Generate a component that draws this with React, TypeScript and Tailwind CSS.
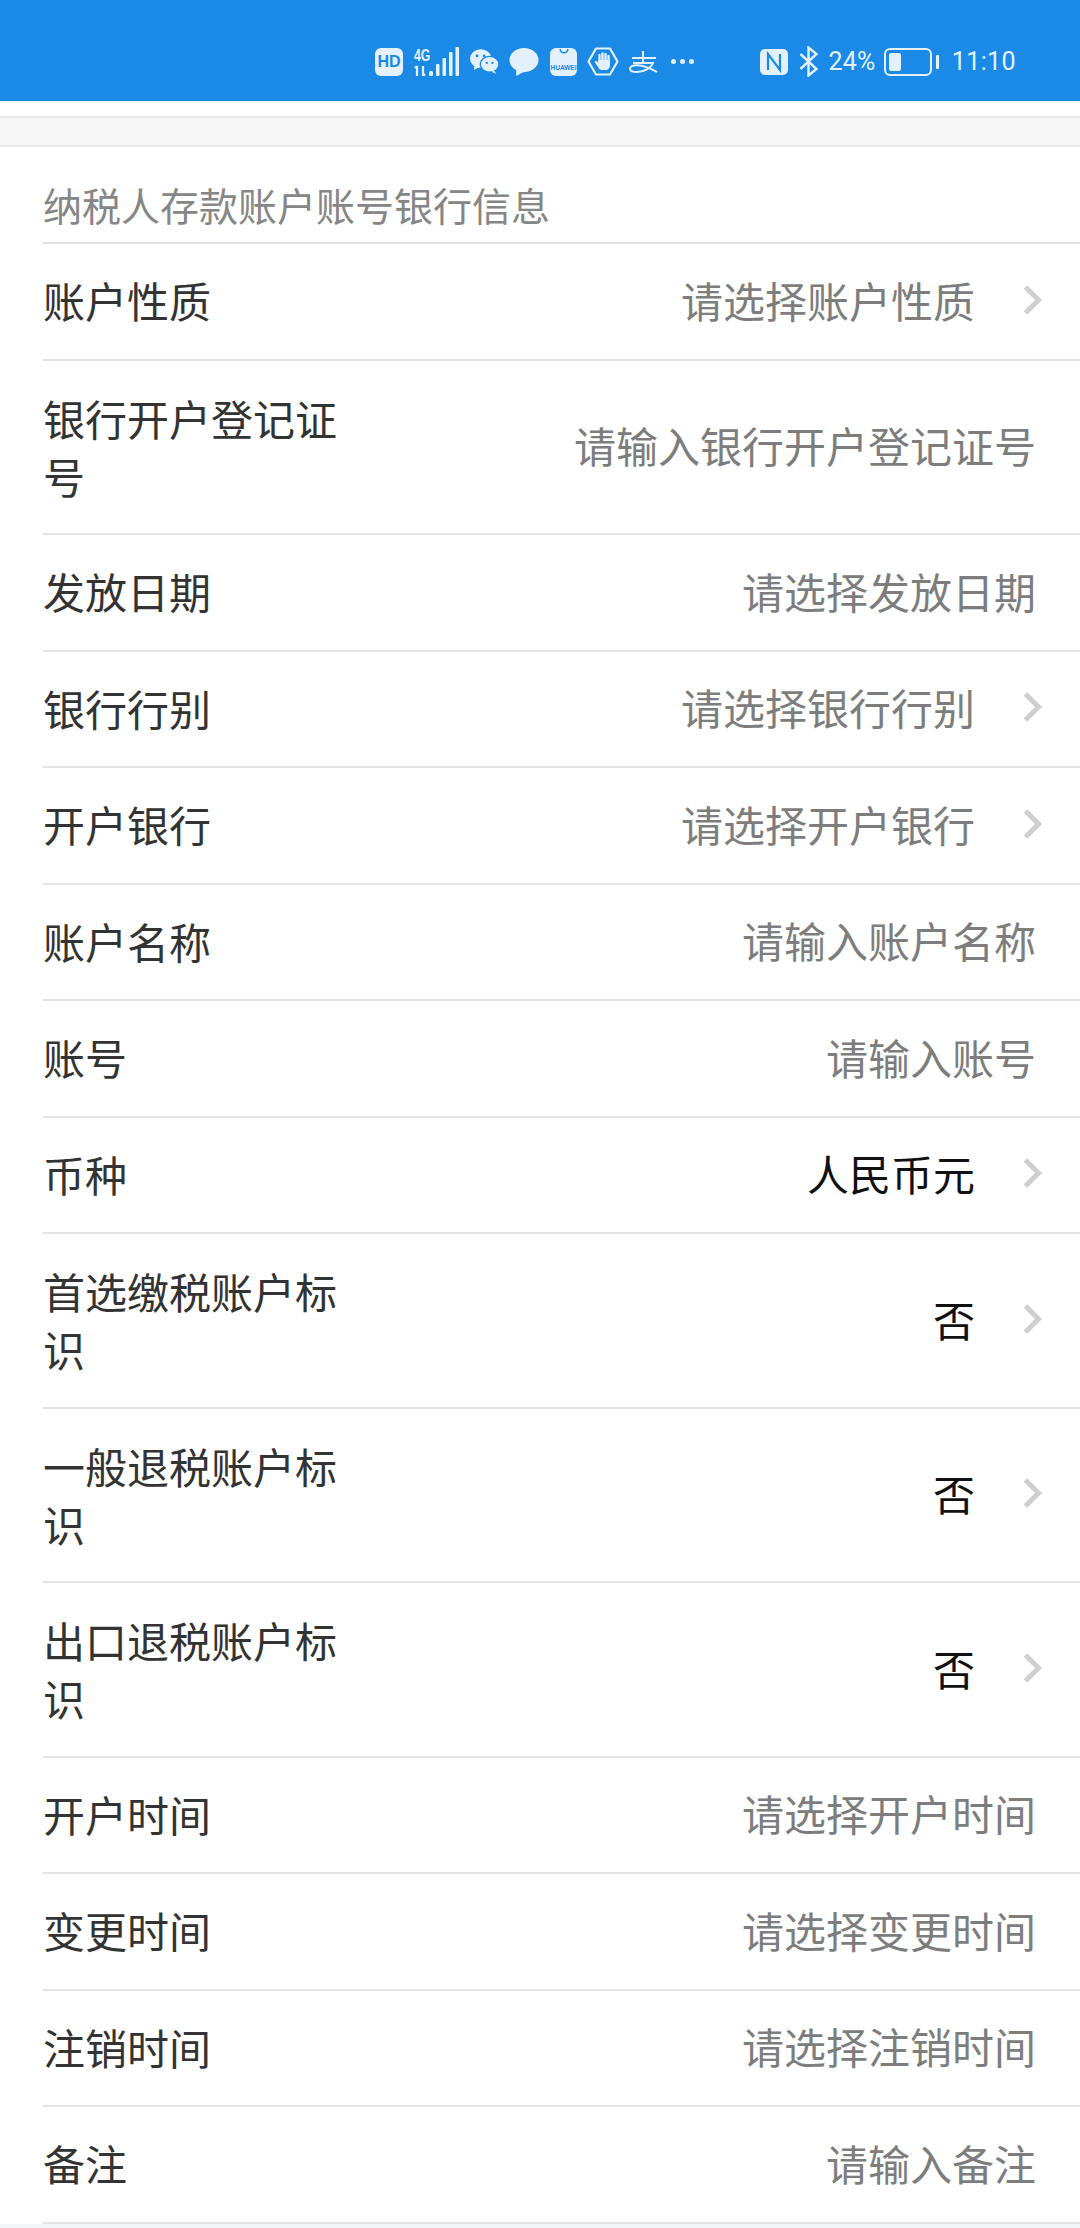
const FONT = "font-['Noto_Sans_CJK_SC','Noto_Sans',sans-serif]";

type Row = {
  label: string;
  value: string;
  chevron?: boolean;
  filled?: boolean;
};

const rows: Row[] = [
  { label: "账户性质", value: "请选择账户性质", chevron: true },
  { label: "银行开户登记证号", value: "请输入银行开户登记证号" },
  { label: "发放日期", value: "请选择发放日期" },
  { label: "银行行别", value: "请选择银行行别", chevron: true },
  { label: "开户银行", value: "请选择开户银行", chevron: true },
  { label: "账户名称", value: "请输入账户名称" },
  { label: "账号", value: "请输入账号" },
  { label: "币种", value: "人民币元", chevron: true, filled: true },
  { label: "首选缴税账户标识", value: "否", chevron: true, filled: true },
  { label: "一般退税账户标识", value: "否", chevron: true, filled: true },
  { label: "出口退税账户标识", value: "否", chevron: true, filled: true },
  { label: "开户时间", value: "请选择开户时间" },
  { label: "变更时间", value: "请选择变更时间" },
  { label: "注销时间", value: "请选择注销时间" },
  { label: "备注", value: "请输入备注" },
];

function StatusIcons() {
  return (
    <div className="flex items-center">
      {/* HD badge */}
      <div className="flex h-[28px] w-[28px] items-center justify-center rounded-[6px] bg-[#e4f1fc]">
        <span className="font-['Liberation_Sans'] text-[16px] font-bold leading-none text-[#1a8ae6]">HD</span>
      </div>
      {/* 4G + signal */}
      <svg className="ml-[10px]" width="46" height="29" viewBox="0 0 46 29" fill="#e4f1fc">
        <text transform="translate(1 14) scale(0.72 1)" fontSize="17" fontWeight="700" fontFamily="Liberation Sans">4G</text>
        <path d="M4 19v10M2 21l2-2M10 19v10M10 29l2-2" stroke="#e4f1fc" strokeWidth="2.2" fill="none" />
        <rect x="16" y="24" width="4" height="5" rx="1.5" />
        <rect x="23" y="17" width="3.5" height="12" rx="1" />
        <rect x="29.5" y="11" width="3.5" height="18" rx="1" />
        <rect x="36" y="5" width="3.5" height="24" rx="1" />
        <rect x="42.5" y="0" width="3.5" height="29" rx="1" />
      </svg>
      {/* wechat */}
      <svg className="ml-[11px]" width="29" height="25" viewBox="0 0 31 26" fill="#e4f1fc">
        <ellipse cx="11.5" cy="10" rx="11.5" ry="10" />
        <path d="M5 17l-1 5 6-3z" />
        <ellipse cx="21" cy="16" rx="10" ry="8.5" stroke="#1a8ae6" strokeWidth="1.5" />
        <path d="M26 23l2 3-5-2z" />
        <circle cx="7.5" cy="7" r="1.5" fill="#1a8ae6" />
        <circle cx="15" cy="7" r="1.5" fill="#1a8ae6" />
        <circle cx="18" cy="14.5" r="1.2" fill="#1a8ae6" />
        <circle cx="24" cy="14.5" r="1.2" fill="#1a8ae6" />
      </svg>
      {/* message */}
      <svg className="ml-[10px]" width="30" height="28" viewBox="0 0 30 29" fill="#e4f1fc">
        <ellipse cx="15" cy="12.5" rx="15" ry="12.5" />
        <path d="M7 21l0 8 9-5z" />
      </svg>
      {/* huawei store */}
      <div className="ml-[11px] flex h-[28px] w-[27px] flex-col items-center justify-between rounded-[6px] bg-[#e4f1fc] pb-[4px]">
        <svg width="14" height="8" viewBox="0 0 14 8" fill="none" stroke="#1a8ae6" strokeWidth="1.4">
          <path d="M3 1c1 5 7 5 8 0" />
        </svg>
        <span className="font-['Liberation_Sans'] text-[6.5px] font-bold leading-none text-[#1a8ae6]">HUAWEI</span>
      </div>
      {/* hand in hexagon */}
      <svg className="ml-[10px]" width="32" height="29" viewBox="0 0 32 29" fill="none">
        <path d="M9 1.5h14l7.5 13L23 27.5H9L1.5 14.5z" stroke="#e4f1fc" strokeWidth="2.2" strokeLinejoin="round" />
        <path d="M12.5 8v8M15.5 6.5V15M18.5 7v8M21.5 9v8" stroke="#e4f1fc" strokeWidth="2.4" strokeLinecap="round" />
        <path d="M11.5 13h11.5v5c0 3-2 5-4.5 5H15c-2 0-3-1-4-3l-3-4.5c-.7-1.200.8-2.200 1.800-1.200l1.700 1.700z" fill="#e4f1fc" />
      </svg>
      {/* alipay */}
      <svg className="ml-[10px]" width="29" height="22" viewBox="0 0 29 22" fill="none" stroke="#e4f1fc" strokeWidth="2">
        <path d="M3 7h24M14 0v11M4 12h20c-2 5-9 9-16 9-4 0-7-1-7-3 0-5 11-6 27 3" />
      </svg>
      {/* overflow dots */}
      <div className="ml-[13px] flex gap-[4px]">
        <span className="h-[5px] w-[5px] rounded-full bg-[#e4f1fc]" />
        <span className="h-[5px] w-[5px] rounded-full bg-[#e4f1fc]" />
        <span className="h-[5px] w-[5px] rounded-full bg-[#e4f1fc]" />
      </div>
    </div>
  );
}

function StatusRight() {
  return (
    <div className="flex items-center text-[#e4f1fc]">
      {/* NFC */}
      <svg width="28" height="26" viewBox="0 0 28 26">
        <rect width="28" height="26" rx="5" fill="#e4f1fc" />
        <path d="M8 21V5l12 16V5" fill="none" stroke="#1a8ae6" strokeWidth="2.2" />
      </svg>
      {/* bluetooth */}
      <svg className="ml-[11px]" width="19" height="31" viewBox="0 0 19 31" fill="none" stroke="#e4f1fc" strokeWidth="2.4">
        <path d="M1.500 8l16 15-8 6.500V1.500l8 6.500-16 15" />
      </svg>
      <span className="ml-[10px] font-['Roboto'] text-[25px] leading-none tracking-[0.3px]">24%</span>
      {/* battery */}
      <div className="ml-[8px] flex items-center">
        <div className="flex h-[28px] w-[48px] items-center rounded-[6px] border-2 border-[#e4f1fc] p-[3px]">
          <div className="h-full w-[12px] rounded-[2px] bg-[#e4f1fc]" />
        </div>
        <div className="ml-[4px] h-[14px] w-[3px] rounded-[1px] bg-[#e4f1fc]" />
      </div>
      <span className="ml-[13px] font-['Roboto'] text-[25px] leading-none tracking-[0.4px]">11:10</span>
    </div>
  );
}

function Chevron() {
  return (
    <svg className="ml-[48px]" width="20" height="32" viewBox="0 0 20 32" fill="none" stroke="#cfcfcf" strokeWidth="5">
      <path d="M2.500 3l13 13-13 13" />
    </svg>
  );
}

function FormRow({ row }: { row: Row }) {
  const wraps = row.label.length > 4;
  return (
    <div className={`flex items-center justify-between border-b-2 border-[#e4e4e6] pr-[37px] ${wraps ? "h-[174.5px]" : "h-[116.5px]"}`}>
      <div className={`w-[300px] text-[42px] leading-[58px] text-[#333333] ${wraps ? "" : "pb-[2px]"}`}>{row.label}</div>
      <div className="flex items-center pb-[3px]">
        <span className={`text-[42px] leading-[58px] ${row.filled ? "text-[#111111]" : "text-[#7d7d7d]"}`}>{row.value}</span>
        {row.chevron ? <Chevron /> : <span className="w-[7px]" />}
      </div>
    </div>
  );
}

export default function App() {
  return (
    <div className={`flex h-[2228px] w-[1080px] flex-col overflow-hidden bg-white ${FONT}`}>
      <div className="flex h-[101px] items-end bg-[#1a8ae6] pb-[24px] pl-[375px] pr-[64px]">
        <div className="flex w-full items-center justify-between">
          <StatusIcons />
          <StatusRight />
        </div>
      </div>

      <div className="h-[15px]" />
      <div className="h-[31px] border-y-2 border-[#e8e8ea] bg-[#f6f6f7]" />

      <div className="flex h-[97px] items-end pl-[43px]">
        <div className="h-full w-full border-b-2 border-[#e0e0e2] pt-[29px] text-[39px] leading-[56px] text-[#868686]">
          纳税人存款账户账号银行信息
        </div>
      </div>

      <div className="pl-[43px]">
        {rows.map((row) => (
          <FormRow key={row.label} row={row} />
        ))}
      </div>

      <div className="flex-1 bg-[#f4f5f7]" />
    </div>
  );
}
